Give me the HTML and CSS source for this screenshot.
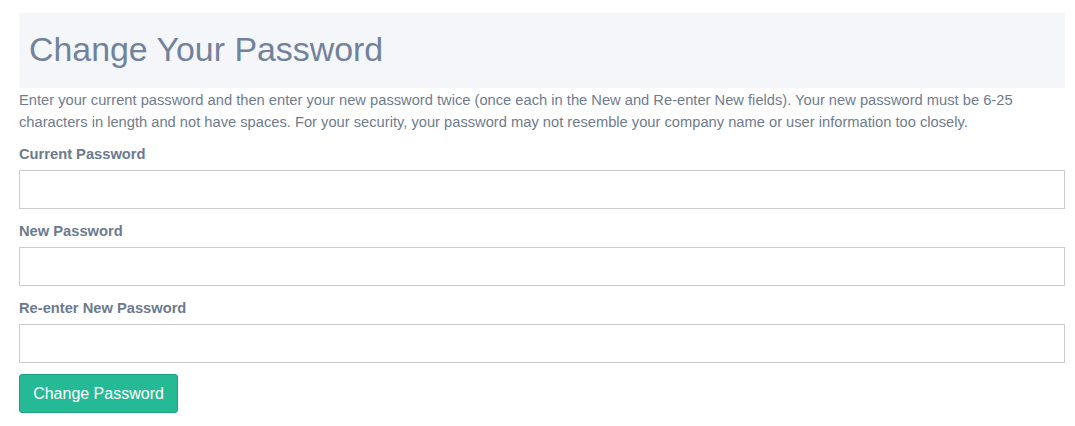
FILE: index.html
```html
<!DOCTYPE html>
<html>
<head>
<meta charset="utf-8">
<link rel="stylesheet" href="styles.css">
</head>
<body>
<div class="page">
  <div class="header"><h1 class="title">Change Your Password</h1></div>
  <p class="intro">Enter your current password and then enter your new password twice (once each in the New and Re-enter New fields). Your new password must be 6-25 characters in length and not have spaces. For your security, your password may not resemble your company name or user information too closely.</p>
  <form class="form">
    <div class="field">
      <label class="label">Current Password</label>
      <input class="input" type="password">
    </div>
    <div class="field">
      <label class="label">New Password</label>
      <input class="input" type="password">
    </div>
    <div class="field">
      <label class="label">Re-enter New Password</label>
      <input class="input" type="password">
    </div>
    <div class="actions"><button class="btn" type="button">Change Password</button></div>
  </form>
</div>
</body>
</html>
```
FILE: styles.css
```css
html, body { margin: 0; padding: 0; background: #fff; }
body { font-family: "Liberation Sans", Arial, sans-serif; color: #6c7a8f; }
.page { padding: 13px 10px 0 19px; width: 1046px; }
.header { background: #f5f6fa; height: 75px; display: flex; align-items: center; padding-left: 10px; }
.title { margin: 0; font-weight: normal; font-size: 33.9px; color: #71829c; line-height: 1; position: relative; top: -1px; }
.intro { margin: 0; font-size: 14.7px; line-height: 22px; padding-top: 1px; color: #6f7c8f; }
.form { margin-top: 11px; display: flex; flex-direction: column; gap: 12px; }
.field { display: flex; flex-direction: column; gap: 6px; }
.label { font-weight: bold; font-size: 14.7px; line-height: 20px; color: #6c7a8f; }
.input { box-sizing: border-box; height: 39px; width: 100%; border: 1px solid #cccccc; margin: 0; padding: 6px 12px; font-size: 14px; background: #fff; }
.actions { margin-top: -1px; }
.btn { box-sizing: border-box; height: 39px; width: 159px; background: #26b996; border: 1px solid #1c9f80; border-radius: 3px; color: #fff; font-family: "Liberation Sans", Arial, sans-serif; font-size: 16px; padding: 0; }
```
